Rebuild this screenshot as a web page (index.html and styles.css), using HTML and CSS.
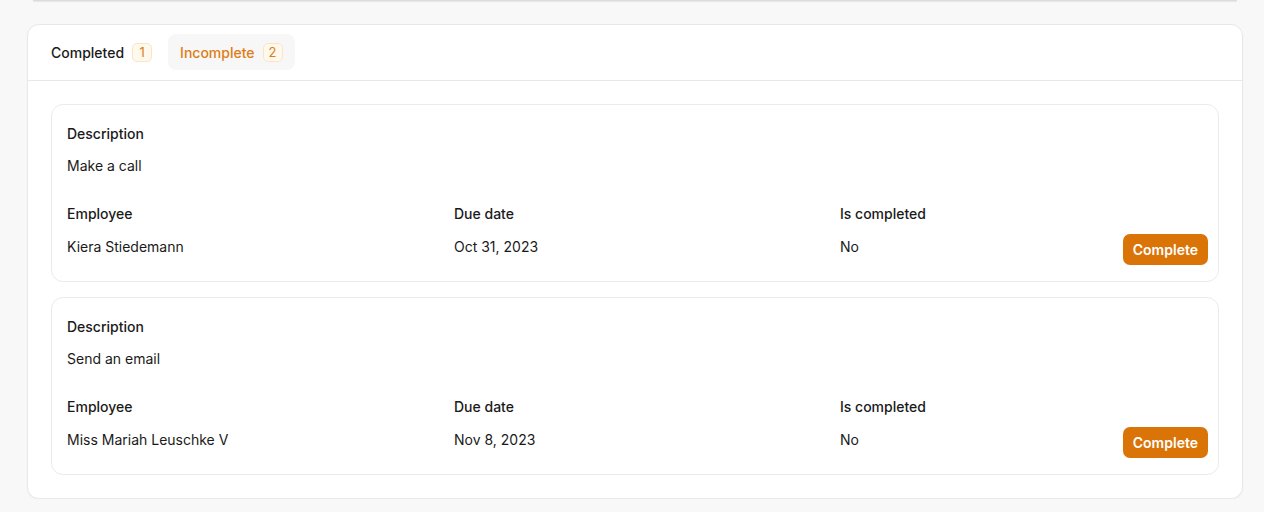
FILE: index.html
```html
<!DOCTYPE html>
<html>
<head>
<meta charset="utf-8">
<link rel="stylesheet" href="styles.css">
</head>
<body>
<div class="prev-card"></div>
<section class="panel">
  <div class="tabs">
    <div class="tab">Completed <span class="badge">1</span></div>
    <div class="tab active">Incomplete <span class="badge">2</span></div>
  </div>
  <div class="list">
    <div class="task">
      <div class="field">
        <div class="label">Description</div>
        <div class="value">Make a call</div>
      </div>
      <div class="row">
        <div class="field">
          <div class="label">Employee</div>
          <div class="value">Kiera Stiedemann</div>
        </div>
        <div class="field">
          <div class="label">Due date</div>
          <div class="value">Oct 31, 2023</div>
        </div>
        <div class="field">
          <div class="label">Is completed</div>
          <div class="value">No</div>
        </div>
        <button class="btn">Complete</button>
      </div>
    </div>
    <div class="task">
      <div class="field">
        <div class="label">Description</div>
        <div class="value">Send an email</div>
      </div>
      <div class="row">
        <div class="field">
          <div class="label">Employee</div>
          <div class="value">Miss Mariah Leuschke V</div>
        </div>
        <div class="field">
          <div class="label">Due date</div>
          <div class="value">Nov 8, 2023</div>
        </div>
        <div class="field">
          <div class="label">Is completed</div>
          <div class="value">No</div>
        </div>
        <button class="btn">Complete</button>
      </div>
    </div>
  </div>
</section>
</body>
</html>
```
FILE: styles.css
```css
* { box-sizing: border-box; }
html, body { margin: 0; padding: 0; }
body {
  background: #f8f8f8;
  font-family: Inter, "Liberation Sans", sans-serif;
  color: #1a1a1a;
  font-size: 14px;
  padding: 0 21px 0 27px;
}
.prev-card {
  height: 1px;
  margin: 0 6px 23px 6px;
  background: #dcdcdc;
  box-shadow: 0 1px 1px rgba(0,0,0,0.08);
}
.panel {
  background: #fff;
  border: 1px solid #e8e8e8;
  border-radius: 12px;
  box-shadow: 0 1px 2px rgba(0,0,0,0.04);
}
.tabs {
  display: flex;
  gap: 4px;
  padding: 9px 11px 10px;
  border-bottom: 1px solid #e8e8e8;
}
.tab {
  display: flex;
  align-items: center;
  gap: 8px;
  height: 36px;
  padding: 0 12px;
  border-radius: 8px;
  font-weight: 500;
  color: #1a1a1a;
}
.tab.active {
  background: #f7f7f7;
  color: #de7c15;
}
.badge {
  display: inline-flex;
  align-items: center;
  justify-content: center;
  width: 20px;
  height: 19px;
  border-radius: 5px;
  background: #fff8ec;
  border: 1px solid #fbe6c4;
  color: #de7c15;
  font-size: 13px;
  font-weight: 400;
}
.list {
  display: flex;
  flex-direction: column;
  gap: 15px;
  padding: 23px 23px 23px;
}
.task {
  border: 1px solid #ebebeb;
  border-radius: 12px;
  padding: 17px 10px 16px 15px;
  display: flex;
  flex-direction: column;
  gap: 24px;
}
.field {
  display: flex;
  flex-direction: column;
  gap: 8px;
}
.row .field {
  gap: 9px;
  padding-bottom: 6px;
}
.label {
  font-weight: 500;
  line-height: 24px;
}
.value {
  line-height: 24px;
}
.row {
  display: grid;
  grid-template-columns: 387px 386px 1fr auto;
  align-items: start;
}
.btn {
  align-self: end;
  background: #da7407;
  color: #fff;
  border: none;
  border-radius: 7px;
  font-family: Inter, "Liberation Sans", sans-serif;
  font-size: 14px;
  font-weight: 600;
  height: 31px;
  padding: 0 10px;
}
```
